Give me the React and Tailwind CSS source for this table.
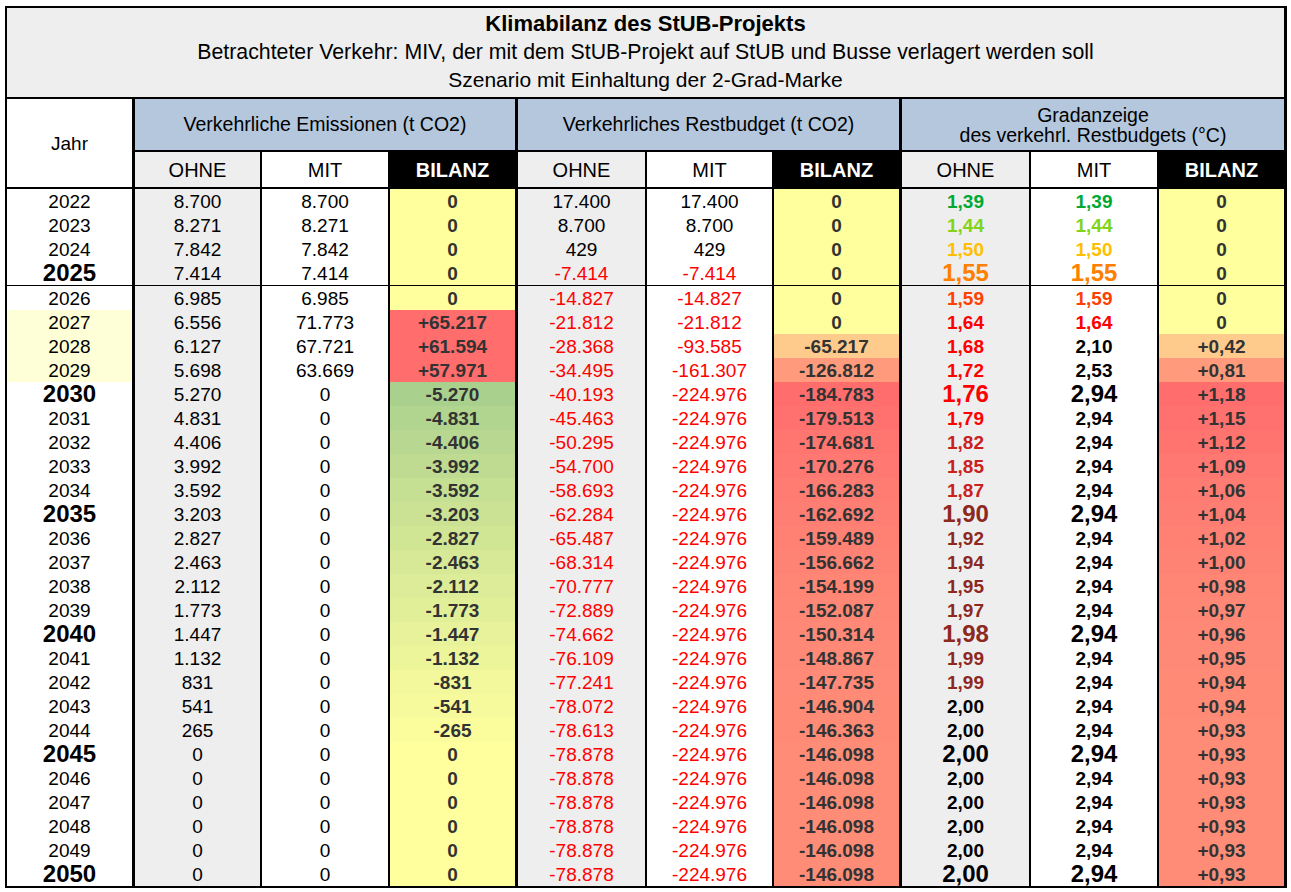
import React from "react";

const RAW = [
  ["2022", "8.700", "8.700", "0", "17.400", "17.400", "0", "1,39", "1,39", "0"],
  ["2023", "8.271", "8.271", "0", "8.700", "8.700", "0", "1,44", "1,44", "0"],
  ["2024", "7.842", "7.842", "0", "429", "429", "0", "1,50", "1,50", "0"],
  ["2025", "7.414", "7.414", "0", "-7.414", "-7.414", "0", "1,55", "1,55", "0"],
  ["2026", "6.985", "6.985", "0", "-14.827", "-14.827", "0", "1,59", "1,59", "0"],
  ["2027", "6.556", "71.773", "+65.217", "-21.812", "-21.812", "0", "1,64", "1,64", "0"],
  ["2028", "6.127", "67.721", "+61.594", "-28.368", "-93.585", "-65.217", "1,68", "2,10", "+0,42"],
  ["2029", "5.698", "63.669", "+57.971", "-34.495", "-161.307", "-126.812", "1,72", "2,53", "+0,81"],
  ["2030", "5.270", "0", "-5.270", "-40.193", "-224.976", "-184.783", "1,76", "2,94", "+1,18"],
  ["2031", "4.831", "0", "-4.831", "-45.463", "-224.976", "-179.513", "1,79", "2,94", "+1,15"],
  ["2032", "4.406", "0", "-4.406", "-50.295", "-224.976", "-174.681", "1,82", "2,94", "+1,12"],
  ["2033", "3.992", "0", "-3.992", "-54.700", "-224.976", "-170.276", "1,85", "2,94", "+1,09"],
  ["2034", "3.592", "0", "-3.592", "-58.693", "-224.976", "-166.283", "1,87", "2,94", "+1,06"],
  ["2035", "3.203", "0", "-3.203", "-62.284", "-224.976", "-162.692", "1,90", "2,94", "+1,04"],
  ["2036", "2.827", "0", "-2.827", "-65.487", "-224.976", "-159.489", "1,92", "2,94", "+1,02"],
  ["2037", "2.463", "0", "-2.463", "-68.314", "-224.976", "-156.662", "1,94", "2,94", "+1,00"],
  ["2038", "2.112", "0", "-2.112", "-70.777", "-224.976", "-154.199", "1,95", "2,94", "+0,98"],
  ["2039", "1.773", "0", "-1.773", "-72.889", "-224.976", "-152.087", "1,97", "2,94", "+0,97"],
  ["2040", "1.447", "0", "-1.447", "-74.662", "-224.976", "-150.314", "1,98", "2,94", "+0,96"],
  ["2041", "1.132", "0", "-1.132", "-76.109", "-224.976", "-148.867", "1,99", "2,94", "+0,95"],
  ["2042", "831", "0", "-831", "-77.241", "-224.976", "-147.735", "1,99", "2,94", "+0,94"],
  ["2043", "541", "0", "-541", "-78.072", "-224.976", "-146.904", "2,00", "2,94", "+0,94"],
  ["2044", "265", "0", "-265", "-78.613", "-224.976", "-146.363", "2,00", "2,94", "+0,93"],
  ["2045", "0", "0", "0", "-78.878", "-224.976", "-146.098", "2,00", "2,94", "+0,93"],
  ["2046", "0", "0", "0", "-78.878", "-224.976", "-146.098", "2,00", "2,94", "+0,93"],
  ["2047", "0", "0", "0", "-78.878", "-224.976", "-146.098", "2,00", "2,94", "+0,93"],
  ["2048", "0", "0", "0", "-78.878", "-224.976", "-146.098", "2,00", "2,94", "+0,93"],
  ["2049", "0", "0", "0", "-78.878", "-224.976", "-146.098", "2,00", "2,94", "+0,93"],
  ["2050", "0", "0", "0", "-78.878", "-224.976", "-146.098", "2,00", "2,94", "+0,93"],
];

const num = (s) => parseFloat(s.replace(/\./g, "").replace(",", "."));

const YELLOW = [255, 255, 158];
const RED = [255, 109, 109];
const GREEN = [170, 208, 142];

const mix = (a, b, t) => {
  const c = a.map((v, i) => Math.round(v + (b[i] - v) * Math.max(0, Math.min(1, t))));
  return `rgb(${c[0]},${c[1]},${c[2]})`;
};

const emBg = (v) => {
  if (v > 0) return mix(YELLOW, RED, 1);
  if (v < 0) return mix(YELLOW, GREEN, -v / 5270);
  return mix(YELLOW, RED, 0);
};
const rbBg = (v) => mix(YELLOW, RED, -v / 184783);
const gbBg = (v) => mix(YELLOW, RED, v / 1.18);

const gradColor = (v) => {
  if (v < 1.42) return "#00a933";
  if (v < 1.47) return "#81d41a";
  if (v < 1.52) return "#ffbf00";
  if (v < 1.57) return "#ff8000";
  if (v < 1.62) return "#ff4000";
  if (v < 1.8) return "#ff0000";
  if (v < 1.89) return "#c9211e";
  if (v < 2.0) return "#8d281e";
  return "#000000";
};

const GRID =
  "grid grid-cols-[128px_127px_128px_128px_129px_127px_128px_129px_128px_125px]";

function Row({ r }) {
  const year = parseInt(r[0], 10);
  const big = year % 5 === 0;
  const groupEnd = big && year !== 2050;
  const bb = groupEnd ? "border-b border-black" : "";
  const cell = "flex items-center justify-center h-full leading-none " + bb;
  const hl = year >= 2027 && year <= 2029;
  const rOhne = num(r[4]);
  const rMit = num(r[5]);
  const gO = num(r[7]);
  const gM = num(r[8]);
  return (
    <div className={GRID + (year === 2025 ? " h-[25px]" : " h-[24px]")}>
      <div
        className={
          cell +
          " border-r-[3px] border-r-black " +
          (hl ? "bg-[#ffffd7]" : "bg-white") +
          (big ? " text-[24px] font-bold" : " text-[19px]")
        }
      >
        {r[0]}
      </div>
      <div className={cell + " border-r-2 border-r-black bg-[#eeeeee] text-[19px]"}>{r[1]}</div>
      <div className={cell + " border-r-2 border-r-black bg-white text-[19px]"}>{r[2]}</div>
      <div
        className={cell + " border-r-[3px] border-r-black text-[19px] font-bold text-[#333333]"}
        style={{ backgroundColor: emBg(num(r[3])) }}
      >
        {r[3]}
      </div>
      <div
        className={
          cell +
          " border-r-2 border-r-black bg-[#eeeeee] text-[19px] " +
          (rOhne < 0 ? "text-[#ff0000]" : "text-black")
        }
      >
        {r[4]}
      </div>
      <div
        className={
          cell +
          " border-r-2 border-r-black bg-white text-[19px] " +
          (rMit < 0 ? "text-[#ff0000]" : "text-black")
        }
      >
        {r[5]}
      </div>
      <div
        className={cell + " border-r-[3px] border-r-black text-[19px] font-bold text-[#333333]"}
        style={{ backgroundColor: rbBg(num(r[6])) }}
      >
        {r[6]}
      </div>
      <div
        className={
          cell +
          " border-r-2 border-r-black bg-[#eeeeee] font-bold" +
          (big ? " text-[24px]" : " text-[19px]")
        }
        style={{ color: gradColor(gO) }}
      >
        {r[7]}
      </div>
      <div
        className={
          cell +
          " border-r-2 border-r-black bg-white font-bold" +
          (big ? " text-[24px]" : " text-[19px]")
        }
        style={{ color: gradColor(gM) }}
      >
        {r[8]}
      </div>
      <div
        className={cell + " text-[19px] font-bold text-[#333333]"}
        style={{ backgroundColor: gbBg(num(r[9])) }}
      >
        {r[9]}
      </div>
    </div>
  );
}

export default function App() {
  return (
    <div className="min-h-[892px] w-[1291px] bg-white pl-[5px] pt-[6px] font-['Liberation_Sans',Arial,sans-serif] text-black">
      <div className="w-[1282px] border-2 border-black border-r-[3px]">
        {/* Title */}
        <div className="flex h-[91px] flex-col items-center justify-start border-b-2 border-black bg-[#eeeeee] pt-[2px]">
          <div className="text-[22px] font-bold leading-[28px]">Klimabilanz des StUB-Projekts</div>
          <div className="text-[21.3px] leading-[28px]">
            Betrachteter Verkehr: MIV, der mit dem StUB-Projekt auf StUB und Busse verlagert werden soll
          </div>
          <div className="text-[21px] leading-[27px]">Szenario mit Einhaltung der 2-Grad-Marke</div>
        </div>

        {/* Header */}
        <div className={GRID + " grid-rows-[53px_37px]"}>
          <div className="row-span-2 flex items-center justify-center border-b-2 border-r-[3px] border-black bg-white pt-[2px] text-[19px]">
            Jahr
          </div>
          <div className="col-span-3 flex items-center justify-center border-b-2 border-r-[3px] border-black bg-[#b4c7dc] text-[19.5px]">
            Verkehrliche Emissionen (t CO2)
          </div>
          <div className="col-span-3 flex items-center justify-center border-b-2 border-r-[3px] border-black bg-[#b4c7dc] text-[19.5px]">
            Verkehrliches Restbudget (t CO2)
          </div>
          <div className="col-span-3 flex flex-col items-center justify-center border-b-2 border-black bg-[#b4c7dc] text-[19.5px] leading-[20px]">
            <span>Gradanzeige</span>
            <span>des verkehrl. Restbudgets (°C)</span>
          </div>

          <div className="flex items-center justify-center border-b-2 border-r-2 border-black bg-[#eeeeee] text-[20px]">OHNE</div>
          <div className="flex items-center justify-center border-b-2 border-r-2 border-black bg-white text-[20px]">MIT</div>
          <div className="flex items-center justify-center border-b-2 border-r-[3px] border-black bg-black text-[20px] font-bold text-white">BILANZ</div>
          <div className="flex items-center justify-center border-b-2 border-r-2 border-black bg-[#eeeeee] text-[20px]">OHNE</div>
          <div className="flex items-center justify-center border-b-2 border-r-2 border-black bg-white text-[20px]">MIT</div>
          <div className="flex items-center justify-center border-b-2 border-r-[3px] border-black bg-black text-[20px] font-bold text-white">BILANZ</div>
          <div className="flex items-center justify-center border-b-2 border-r-2 border-black bg-[#eeeeee] text-[20px]">OHNE</div>
          <div className="flex items-center justify-center border-b-2 border-r-2 border-black bg-white text-[20px]">MIT</div>
          <div className="flex items-center justify-center border-b-2 border-black bg-black text-[20px] font-bold text-white">BILANZ</div>
        </div>

        {/* Rows */}
        {RAW.map((r) => (
          <Row key={r[0]} r={r} />
        ))}
      </div>
    </div>
  );
}
